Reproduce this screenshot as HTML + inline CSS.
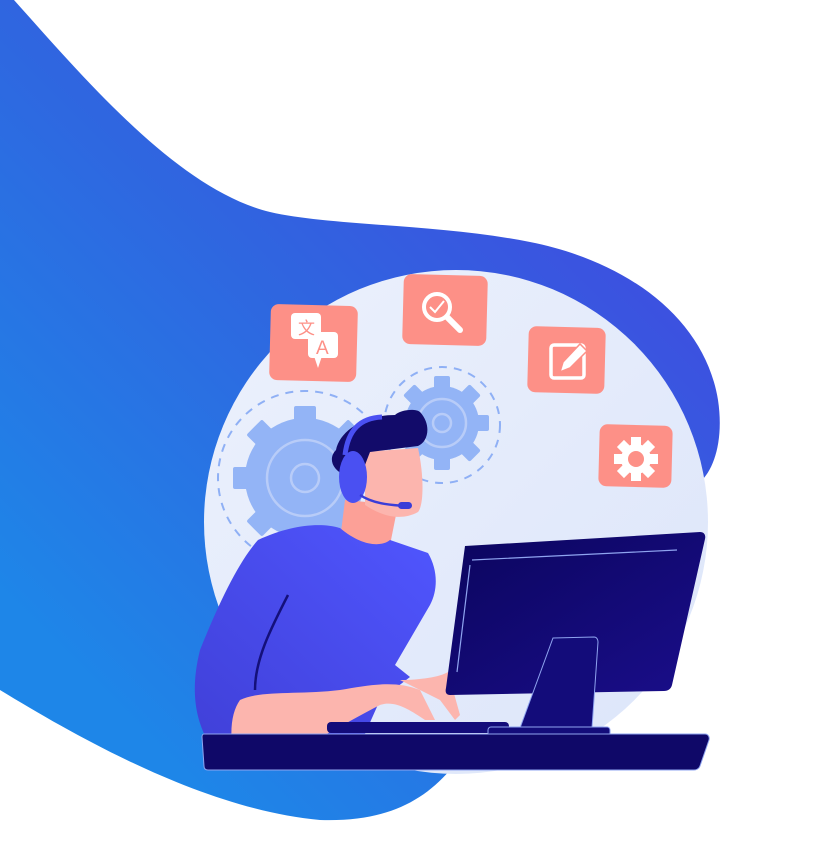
<!DOCTYPE html>
<html><head><meta charset="utf-8"><style>html,body{margin:0;padding:0;background:#fff;width:824px;height:843px;overflow:hidden}</style></head>
<body>
<svg width="824" height="843" viewBox="0 0 824 843" xmlns="http://www.w3.org/2000/svg">
<defs>
<linearGradient id="bg" x1="0.2" y1="0.9" x2="0.9" y2="0.1">
<stop offset="0" stop-color="#1e86e8"/><stop offset="0.5" stop-color="#2f66e0"/><stop offset="1" stop-color="#4346e0"/></linearGradient>
<linearGradient id="cg" x1="0" y1="0" x2="1" y2="1"><stop offset="0" stop-color="#ecf1fc"/><stop offset="1" stop-color="#dce5fa"/></linearGradient>
<linearGradient id="sh" x1="0" y1="1" x2="1" y2="0"><stop offset="0" stop-color="#4040d8"/><stop offset="1" stop-color="#5056ff"/></linearGradient>
<linearGradient id="mon" x1="0" y1="0" x2="1" y2="1"><stop offset="0" stop-color="#0b055e"/><stop offset="1" stop-color="#1a0e8a"/></linearGradient>
</defs>
<path d="M0,0 L14,0 C90,85 180,190 270,212 C330,226 440,224 530,242 C630,262 705,320 718,400 C724,440 714,470 700,482 L560,620 L450,770 C420,805 380,822 320,820 C210,810 90,745 0,690 Z" fill="url(#bg)"/>
<circle cx="456" cy="522" r="252" fill="url(#cg)"/>
<!-- gears -->
<g fill="none" stroke="#8fb0f5" stroke-width="2" stroke-dasharray="8 7">
<circle cx="305" cy="478" r="87"/><circle cx="442" cy="425" r="58"/></g>
<g fill="#93b4f6">
<circle cx="305" cy="478" r="60"/>
<g transform="translate(305,478)"><rect x="-11" y="-72" width="22" height="144" rx="2"/><rect x="-72" y="-11" width="144" height="22" rx="2"/><rect x="-11" y="-72" width="22" height="144" rx="2" transform="rotate(45)"/><rect x="-11" y="-72" width="22" height="144" rx="2" transform="rotate(-45)"/></g>
<circle cx="442" cy="423" r="37"/>
<g transform="translate(442,423)"><rect x="-8" y="-47" width="16" height="94" rx="2"/><rect x="-47" y="-8" width="94" height="16" rx="2"/><rect x="-8" y="-47" width="16" height="94" rx="2" transform="rotate(45)"/><rect x="-8" y="-47" width="16" height="94" rx="2" transform="rotate(-45)"/></g>
</g>
<g fill="none" stroke="#b8ccf8" stroke-width="2.5"><circle cx="305" cy="478" r="38"/><circle cx="305" cy="478" r="14"/><circle cx="442" cy="423" r="24"/><circle cx="442" cy="423" r="9"/></g>
<!-- cards -->
<g fill="#fd9087">
<rect x="270" y="305" width="87" height="76" rx="8" transform="rotate(1.5 313 343)"/>
<rect x="403" y="275" width="84" height="70" rx="8" transform="rotate(1.5 445 310)"/>
<rect x="528" y="327" width="77" height="66" rx="8" transform="rotate(1.5 566 360)"/>
<rect x="599" y="425" width="73" height="62" rx="8" transform="rotate(1.5 635 456)"/>
</g>
<g fill="#fff">
<rect x="291" y="313" width="30" height="26" rx="4"/>
<rect x="308" y="332" width="30" height="26" rx="4"/><path d="M314,356 L318,368 L322,356 Z"/>
</g>
<text x="298" y="334" font-family="Noto Sans CJK SC, sans-serif" font-size="17" fill="#fd9087">文</text>
<text x="316" y="354" font-family="Liberation Sans, sans-serif" font-size="19" fill="#fd9087">A</text>
<g fill="none" stroke="#fff" stroke-width="4" stroke-linecap="round"><circle cx="437" cy="307" r="13"/><path d="M447,317 L460,330" stroke-width="6"/></g>
<path d="M430,307 L435,312 L444,301" fill="none" stroke="#fff" stroke-width="2"/>
<rect x="551" y="345" width="33" height="33" rx="3" fill="none" stroke="#fff" stroke-width="3.5"/>
<path d="M560,372 L563,362 L580,344 L587,351 L570,368 Z" fill="#fff" stroke="#fd9087" stroke-width="1.5"/>
<g transform="translate(636,459)" fill="#fff"><circle r="15"/><g><rect x="-5" y="-22" width="10" height="44"/><rect x="-22" y="-5" width="44" height="10"/><rect x="-5" y="-22" width="10" height="44" transform="rotate(45)"/><rect x="-5" y="-22" width="10" height="44" transform="rotate(-45)"/></g><circle r="8" fill="#fd9087"/></g>
<!-- person -->
<path d="M345,500 L398,505 L390,545 C380,560 355,560 340,540 Z" fill="#fca097"/>
<path d="M200,650 C220,600 240,560 258,540 C290,525 320,522 340,528 C360,545 380,548 390,540 L428,553 C438,570 438,590 430,605 L395,665 L410,677 L380,700 L360,745 L210,745 C195,720 190,690 200,650 Z" fill="url(#sh)"/>
<path d="M288,595 C270,630 255,660 255,690" fill="none" stroke="#14107a" stroke-width="2.5"/>
<path d="M240,700 C260,690 300,695 340,690 C370,685 395,680 420,690 L435,720 L425,720 C410,710 395,700 380,705 C350,720 320,740 300,745 L232,745 C230,725 233,710 240,700 Z" fill="#fcb5ae"/>
<path d="M400,680 C420,680 440,677 448,672 L460,715 L455,720 L440,700 Z" fill="#fcb5ae"/>
<path d="M365,452 L418,448 C424,475 424,505 418,512 C400,522 380,515 365,505 Z" fill="#fcb5ae"/>
<path d="M336,450 C340,430 365,415 395,415 C400,410 415,408 420,412 C432,425 428,442 418,446 L370,452 L365,465 L345,475 C332,470 328,458 336,450 Z" fill="#120b6a"/>
<path d="M345,455 C348,430 360,418 382,417" fill="none" stroke="#4a50f2" stroke-width="5"/>
<ellipse cx="353" cy="477" rx="14" ry="26" fill="#4a50f2"/>
<path d="M360,495 C375,505 395,505 405,506" fill="none" stroke="#3a3dd8" stroke-width="2.5"/>
<rect x="398" y="502" width="14" height="7" rx="3.5" fill="#3a3dd8"/>
<!-- monitor -->
<path d="M465,546 L700,532 C704,532 706,535 705,539 L672,685 C671,689 668,691 664,691 L450,695 C446,695 445,692 446,688 Z" fill="url(#mon)"/>
<path d="M472,560 L677,550 M470,565 L457,672" stroke="#8fa4f0" stroke-width="1.2" fill="none"/>
<path d="M553,638 L594,637 C597,637 598,640 598,642 L592,728 L520,728 Z" fill="#130c7a" stroke="#8fa4f0" stroke-width="1"/>
<rect x="327" y="722" width="182" height="11" rx="4" fill="#130c7a"/>
<rect x="488" y="727" width="122" height="10" rx="3" fill="#130c7a" stroke="#8fa4f0" stroke-width="1"/>
<path d="M204,734 L705,734 C708,734 710,737 709,740 L700,766 C699,769 696,770 694,770 L208,770 C205,770 204,768 204,766 L202,737 C202,735 203,734 204,734 Z" fill="#0f0868" stroke="#8fa4f0" stroke-width="1"/>
</svg>
</body></html>
